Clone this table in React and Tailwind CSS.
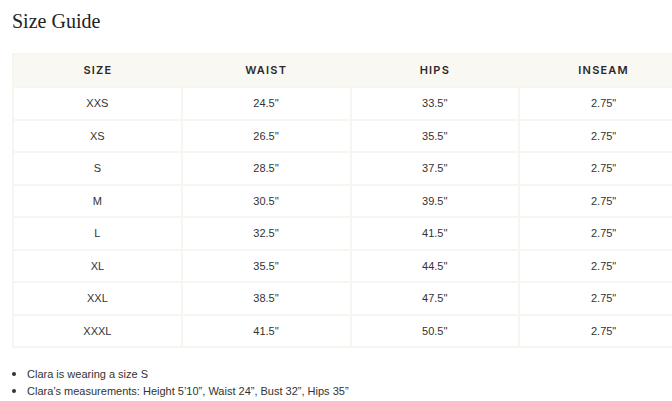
const rows = [
  ['XXS', '24.5\'\'', '33.5\'\'', '2.75"'],
  ['XS', '26.5\'\'', '35.5\'\'', '2.75"'],
  ['S', '28.5\'\'', '37.5\'\'', '2.75"'],
  ['M', '30.5\'\'', '39.5\'\'', '2.75"'],
  ['L', '32.5\'\'', '41.5\'\'', '2.75"'],
  ['XL', '35.5\'\'', '44.5\'\'', '2.75"'],
  ['XXL', '38.5\'\'', '47.5\'\'', '2.75"'],
  ['XXXL', '41.5\'\'', '50.5\'\'', '2.75"'],
];

const headers = ['SIZE', 'WAIST', 'HIPS', 'INSEAM'];

export default function App() {
  return (
    <div className="w-[672px] h-[401px] overflow-hidden bg-white pl-[12px] pt-[8px]">
      <h1 className="text-[20px] leading-[26px] text-[#222] font-['Liberation_Serif',serif]">
        Size Guide
      </h1>
      <table className="mt-[19px] w-[677px] border-collapse table-fixed font-['Liberation_Sans',Arial,sans-serif] text-[11px] text-[#333]">
        <thead>
          <tr className="bg-[#faf8f3] h-[33px]">
            {headers.map((h) => (
              <th
                key={h}
                className="border-y-2 border-[#f7f5ef] first:border-l-2 font-semibold font-['Inter',sans-serif] text-[11px] tracking-[1.2px] text-[#2a2a2a] text-center"
              >
                {h}
              </th>
            ))}
          </tr>
        </thead>
        <tbody>
          {rows.map((r) => (
            <tr key={r[0]} className="h-[32.5px]">
              {r.map((c, i) => (
                <td key={i} className="border-2 border-[#f7f5ef] text-center">
                  {c}
                </td>
              ))}
            </tr>
          ))}
        </tbody>
      </table>
      <ul className="mt-[17px] pl-[15px] list-disc marker:text-[14px] font-['Liberation_Sans',Arial,sans-serif] text-[11px] leading-[16px] text-[#333]">
        <li>Clara is wearing a size S</li>
        <li>Clara’s measurements: Height 5’10”, Waist 24”, Bust 32”, Hips 35”</li>
      </ul>
    </div>
  );
}
